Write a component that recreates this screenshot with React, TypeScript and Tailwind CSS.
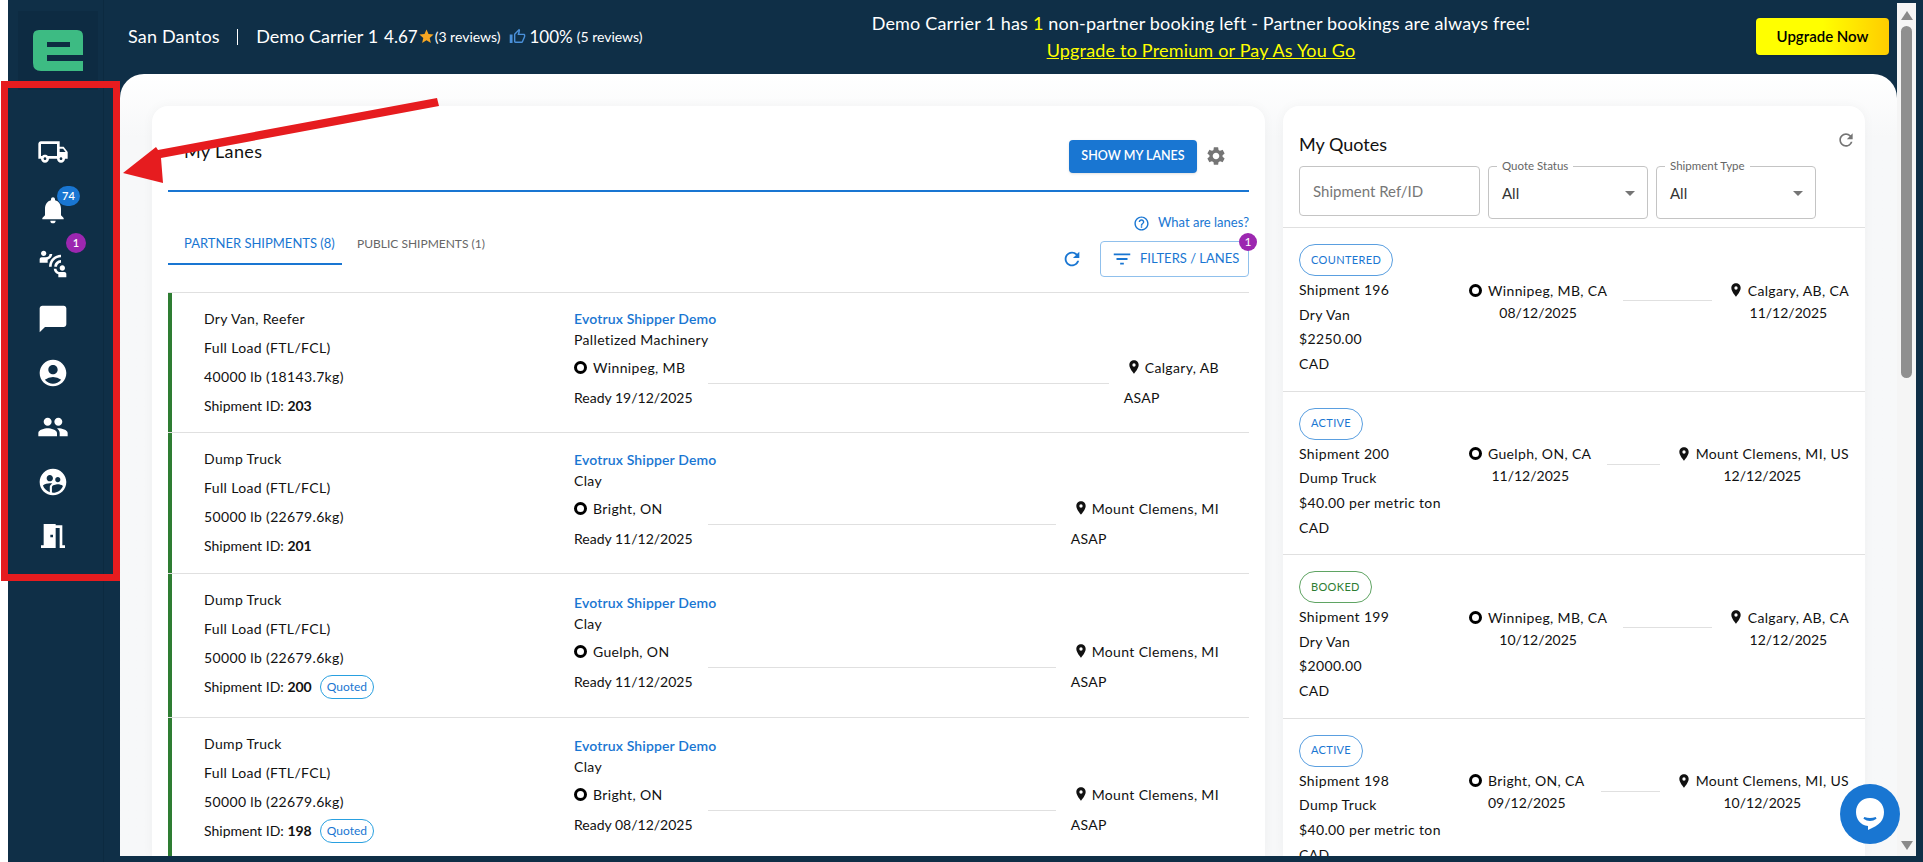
import { MdOutlineLocalShipping, MdNotifications, MdConnectWithoutContact, MdChatBubble, MdAccountCircle, MdPeople, MdSupervisedUserCircle, MdMeetingRoom, MdStar, MdOutlineThumbUp, MdSettings, MdRefresh, MdFilterList, MdHelpOutline, MdLocationOn, MdArrowDropDown } from 'react-icons/md';

const LANES = [
  { equip: 'Dry Van, Reefer', weight: '40000 lb (18143.7kg)', id: '203', quoted: false, material: 'Palletized Machinery', from: 'Winnipeg, MB', to: 'Calgary, AB', ready: '19/12/2025', h: 'h-[140px]', pt: 'pt-[16px]' },
  { equip: 'Dump Truck', weight: '50000 lb (22679.6kg)', id: '201', quoted: false, material: 'Clay', from: 'Bright, ON', to: 'Mount Clemens, MI', ready: '11/12/2025', h: 'h-[141px]', pt: 'pt-[17px]' },
  { equip: 'Dump Truck', weight: '50000 lb (22679.6kg)', id: '200', quoted: true, material: 'Clay', from: 'Guelph, ON', to: 'Mount Clemens, MI', ready: '11/12/2025', h: 'h-[144px]', pt: 'pt-[19px]' },
  { equip: 'Dump Truck', weight: '50000 lb (22679.6kg)', id: '198', quoted: true, material: 'Clay', from: 'Bright, ON', to: 'Mount Clemens, MI', ready: '08/12/2025', h: 'h-[144px]', pt: 'pt-[18px]' },
];

const QUOTES = [
  { status: 'COUNTERED', green: false, id: '196', equip: 'Dry Van', price: '$2250.00', from: 'Winnipeg, MB, CA', fromDate: '08/12/2025', to: 'Calgary, AB, CA', toDate: '11/12/2025' },
  { status: 'ACTIVE', green: false, id: '200', equip: 'Dump Truck', price: '$40.00 per metric ton', from: 'Guelph, ON, CA', fromDate: '11/12/2025', to: 'Mount Clemens, MI, US', toDate: '12/12/2025' },
  { status: 'BOOKED', green: true, id: '199', equip: 'Dry Van', price: '$2000.00', from: 'Winnipeg, MB, CA', fromDate: '10/12/2025', to: 'Calgary, AB, CA', toDate: '12/12/2025' },
  { status: 'ACTIVE', green: false, id: '198', equip: 'Dump Truck', price: '$40.00 per metric ton', from: 'Bright, ON, CA', fromDate: '09/12/2025', to: 'Mount Clemens, MI, US', toDate: '10/12/2025' },
];

const NAV = [
  { icon: MdOutlineLocalShipping, row: 'h-[63px]' },
  { icon: MdNotifications, row: 'h-[54.3px]', badge: '74', badgeClass: 'bg-[#1976d2] w-[23px] h-[20px] top-[3px] left-[26px]' },
  { icon: MdConnectWithoutContact, row: 'h-[54.3px]', badge: '1', badgeClass: 'bg-[#9c27b0] w-5 h-5 -top-[4px] left-[35px]' },
  { icon: MdChatBubble, row: 'h-[54.3px]' },
  { icon: MdAccountCircle, row: 'h-[54.3px]' },
  { icon: MdPeople, row: 'h-[54.3px]' },
  { icon: MdSupervisedUserCircle, row: 'h-[54.3px]' },
  { icon: MdMeetingRoom, row: 'h-[54.3px]' },
];

function Ring() {
  return <span className="inline-block w-[13px] h-[13px] rounded-full border-[3px] border-black shrink-0" />;
}

function Logo() {
  return (
    <svg width="50" height="41" viewBox="0 0 50 41">
      <path
        fill="#3dbb83"
        fillRule="evenodd"
        d="M6 0H44Q50 0 50 6V25H14V31H50V41H8Q0 41 0 33V6Q0 0 6 0ZM14 12V17H37V12Z"
      />
    </svg>
  );
}

function Sidebar() {
  return (
    <div className="w-[112px] shrink-0">
      <div className="w-[96px] h-full border-r border-[#0c2a40] flex flex-col items-center pr-[5px]">
        <div className="mt-[11px] ml-[9px] w-[80px] h-[79px] bg-[#0d2b42] flex items-center justify-center">
          <Logo />
        </div>
        <div className="mt-[30px] flex flex-col">
          {NAV.map((n, i) => (
            <div key={i} className={`relative w-[44px] flex items-center justify-center text-white ${n.row}`}>
              <n.icon size={32} />
              {n.badge && (
                <span className={`absolute flex items-center justify-center rounded-full text-white text-[11px] font-semibold ${n.badgeClass}`}>{n.badge}</span>
              )}
            </div>
          ))}
        </div>
      </div>
    </div>
  );
}

function Header() {
  return (
    <div className="h-[74px] shrink-0 flex items-center text-white relative">
      <div className="flex items-center w-[532px] text-[18px] -mt-[1px]">
        <span className="ml-[8px] tracking-[0.01em]">San Dantos</span>
        <span className="w-[1.5px] h-[16px] bg-white ml-[17px]" />
        <span className="ml-[18px]">Demo Carrier 1</span>
        <span className="ml-[6px] text-[17px]">4.67</span>
        <MdStar size={17} className="text-[#f5a623]" />
        <span className="text-[14px]">(3 reviews)</span>
        <MdOutlineThumbUp size={17} className="text-[#4a90d9] ml-[8px]" />
        <span className="ml-[4px] text-[17px]">100%</span>
        <span className="text-[14px] ml-[4px]">(5 reviews)</span>
      </div>
      <div className="flex-1 flex flex-col items-center text-[18px] leading-[27px] -mt-[1px] -ml-[6px] tracking-[0.01em]">
        <div>Demo Carrier 1 has <span className="text-[#ffff00]">1</span> non-partner booking left - Partner bookings are always free!</div>
        <a className="text-[#ffff00] underline">Upgrade to Premium or Pay As You Go</a>
      </div>
      <button className="w-[133px] h-[37px] rounded bg-linear-to-r from-[#ffff00] from-50% to-[#ffcc00] text-black text-[15px] font-semibold mr-[8px] -mt-[2px] shadow">Upgrade Now</button>
    </div>
  );
}

function LaneRow({ lane }: { lane: (typeof LANES)[number] }) {
  return (
    <div className={`flex border-t border-[#e0e0e0] ${lane.h}`}>
      <div className="w-[406px] shrink-0 border-l-4 border-[#2e7d32] pl-[32px] pt-[11px] leading-[29px]">
        <div>{lane.equip}</div>
        <div>Full Load (FTL/FCL)</div>
        <div>{lane.weight}</div>
        <div className="flex items-center tracking-normal">
          Shipment ID:&nbsp;<b>{lane.id}</b>
          {lane.quoted && (
            <span className="ml-[8px] h-[24px] px-[6px] flex items-center rounded-full border border-[#29a0e0] text-[#1976d2] text-[12px]">Quoted</span>
          )}
        </div>
      </div>
      <div className={`flex-1 pr-[30px] ${lane.pt}`}>
        <div className="leading-5 font-semibold tracking-[0.01em] text-[#1976d2]">Evotrux Shipper Demo</div>
        <div className="leading-5 mt-px">{lane.material}</div>
        <div className="flex mt-[7px]">
          <div>
            <div className="h-5 flex items-center gap-[6px]"><Ring />{lane.from}</div>
            <div className="h-5 mt-[10px] flex items-center tracking-normal">Ready {lane.ready}</div>
          </div>
          <div className="flex-1 h-px bg-[#e0e0e0] mx-[15px] mt-[26px]" />
          <div>
            <div className="h-5 flex items-center gap-[3px]"><MdLocationOn size={16} className="ml-[2px]" />{lane.to}</div>
            <div className="h-5 mt-[10px] flex items-center">ASAP</div>
          </div>
        </div>
      </div>
    </div>
  );
}

function LanesCard() {
  return (
    <div className="w-[1113px] shrink-0 bg-white rounded-t-2xl shadow-[0_0_12px_rgba(0,0,0,0.04)] px-[16px] text-[14px] tracking-[0.025em] text-[#111]">
      <div className="h-[86px] border-b-2 border-[#1976d2] flex items-start">
        <h2 className="mt-[33px] ml-[16px] text-[18px] leading-6">My Lanes</h2>
        <button className="ml-auto mt-[34px] w-[128px] h-[33px] rounded bg-[#1976d2] text-white text-[12.5px] font-semibold tracking-normal shadow">SHOW MY LANES</button>
        <MdSettings size={22} className="mt-[39px] ml-[8px] mr-[22px] text-[#757575]" />
      </div>
      <div className="h-[100px] flex relative tracking-normal">
        <div className="self-start mt-[32px] flex text-[13px]">
          <div className="w-[174px] h-[41px] border-b-2 border-[#1976d2] text-[#1976d2] pl-[16px] pt-[10px]">PARTNER SHIPMENTS (8)</div>
          <div className="ml-[15px] pt-[11px] text-[12px] text-[#666]">PUBLIC SHIPMENTS (1)</div>
        </div>
        <div className="ml-auto flex flex-col items-end">
          <div className="mt-[21px] h-5 flex items-center gap-[8px] text-[13px] text-[#1976d2]"><MdHelpOutline size={17} />What are lanes?</div>
          <div className="mt-[8px] flex items-center gap-[17px]">
            <MdRefresh size={22} className="text-[#1976d2]" />
            <div className="relative w-[149px] h-[36px] rounded border border-[#90c0ec] flex items-center whitespace-nowrap text-[#1976d2] text-[13px] pl-[10px] gap-[7px]">
              <MdFilterList size={22} />FILTERS / LANES
              <span className="absolute -top-[9px] -right-[9px] w-[18px] h-[18px] rounded-full bg-[#9c27b0] text-white text-[12px] flex items-center justify-center">1</span>
            </div>
          </div>
        </div>
      </div>
      {LANES.map((l) => <LaneRow key={l.id} lane={l} />)}
    </div>
  );
}

function Select({ label }: { label: string }) {
  return (
    <div className="relative w-[160px] h-[53px] rounded border border-[#c4c4c4] flex items-center pl-[13px] pr-[5px] text-[#333] text-[15px]">
      <span className="absolute -top-[8px] left-[8px] bg-white px-[5px] text-[11.5px] leading-[14px] text-[#666]">{label}</span>
      <span className="mt-[2px]">All</span>
      <MdArrowDropDown size={24} className="ml-auto text-[#757575]" />
    </div>
  );
}

function QuoteRow({ q }: { q: (typeof QUOTES)[number] }) {
  return (
    <div className="h-[163.5px] border-t border-[#e0e0e0] pl-[16px] pr-[16px] pt-[16px]">
      <span className={`inline-flex items-center h-[32px] px-[11px] rounded-full border text-[11px] ${q.green ? 'border-[#5fa463] text-[#2e7d32]' : 'border-[#5a9fe0] text-[#1976d2]'}`}>{q.status}</span>
      <div className="flex mt-[2px]">
        <div className="w-[170px] shrink-0 leading-[24.7px]">
          <div>Shipment {q.id}</div>
          <div>{q.equip}</div>
          <div>{q.price}</div>
          <div>CAD</div>
        </div>
        <div className="flex-1 flex items-start mt-[2px]">
          <div className="flex flex-col items-center">
            <div className="h-5 flex items-center gap-[6px]"><Ring />{q.from}</div>
            <div className="h-5 mt-[2px] flex items-center tracking-normal">{q.fromDate}</div>
          </div>
          <div className="flex-1 h-px bg-[#e0e0e0] mx-[16px] mt-[20px]" />
          <div className="flex flex-col items-center">
            <div className="h-5 flex items-center gap-[4px]"><MdLocationOn size={16} />{q.to}</div>
            <div className="h-5 mt-[2px] flex items-center tracking-normal">{q.toDate}</div>
          </div>
        </div>
      </div>
    </div>
  );
}

function QuotesCard() {
  return (
    <div className="w-[582px] shrink-0 bg-white rounded-t-2xl shadow-[0_0_12px_rgba(0,0,0,0.04)] text-[14px] tracking-[0.025em] text-[#111]">
      <div className="h-[121px] px-[16px] relative tracking-normal">
        <div className="flex">
          <h2 className="mt-[26px] text-[18px] leading-6">My Quotes</h2>
          <MdRefresh size={20} className="ml-auto mt-[24px] -mr-[7px] text-[#757575]" />
        </div>
        <div className="flex items-start gap-[8px] mt-[10px]">
          <div className="w-[181px] h-[50px] rounded border border-[#c4c4c4] flex items-center pl-[13px] text-[15px] text-[#777]">Shipment Ref/ID</div>
          <Select label="Quote Status" />
          <Select label="Shipment Type" />
        </div>
      </div>
      {QUOTES.map((q) => <QuoteRow key={q.id} q={q} />)}
    </div>
  );
}

function Scrollbar() {
  return (
    <div className="w-[19px] shrink-0 mt-[3px] mb-[6px] bg-[#f5f5f5] flex flex-col items-center">
      <svg width="12" height="9" viewBox="0 0 12 9" className="mt-[8px]"><path d="M6 0L12 9H0Z" fill="#8a8a8a" /></svg>
      <div className="w-[11px] h-[352px] mt-[6px] rounded-full bg-[#8f8f8f]" />
      <svg width="12" height="9" viewBox="0 0 12 9" className="mt-auto mb-[6px]"><path d="M6 9L0 0H12Z" fill="#8a8a8a" /></svg>
    </div>
  );
}

export default function App() {
  return (
    <div className="relative w-[1923px] h-[862px] overflow-hidden flex bg-[#0f2f47]" style={{ fontFamily: '"Lato", "Liberation Sans", sans-serif' }}>
      <div className="w-2 shrink-0 bg-white" />
      <Sidebar />
      <div className="flex-1 min-w-0 flex flex-col pb-[6px]">
        <Header />
        <div className="flex-1 min-h-0 overflow-hidden rounded-t-[24px] bg-linear-to-b from-white to-[#f7f8f9] to-8% pt-[32px] pl-[32px] flex gap-[18px]">
          <LanesCard />
          <QuotesCard />
        </div>
      </div>
      <Scrollbar />
      <div className="w-[7px] shrink-0" />

      {/* annotation over the page */}
      <div className="absolute left-px top-[81px] w-[119px] h-[500px] border-[7px] border-[#e61c1f] pointer-events-none" />
      <svg className="absolute left-0 top-0 pointer-events-none" width="500" height="200" viewBox="0 0 500 200">
        <path d="M437 98L439 106L161 158L163 183L123 173L156 147L158 150Z" fill="#e61c1f" />
      </svg>
      <div className="absolute left-[1840px] top-[784px] w-[60px] h-[60px] rounded-full bg-[#1976d2] flex items-center justify-center">
        <svg width="32" height="36" viewBox="0 0 32 36">
          <path d="M16 2C24 2 30 8 30 16C30 24 26 29 14 34L14 30C6 29 2 23 2 16C2 8 8 2 16 2Z" fill="white" />
          <path d="M10 22Q16 26 22 22Q16 24 10 22Z" fill="#1976d2" stroke="#1976d2" strokeWidth="2" />
        </svg>
      </div>
    </div>
  );
}
